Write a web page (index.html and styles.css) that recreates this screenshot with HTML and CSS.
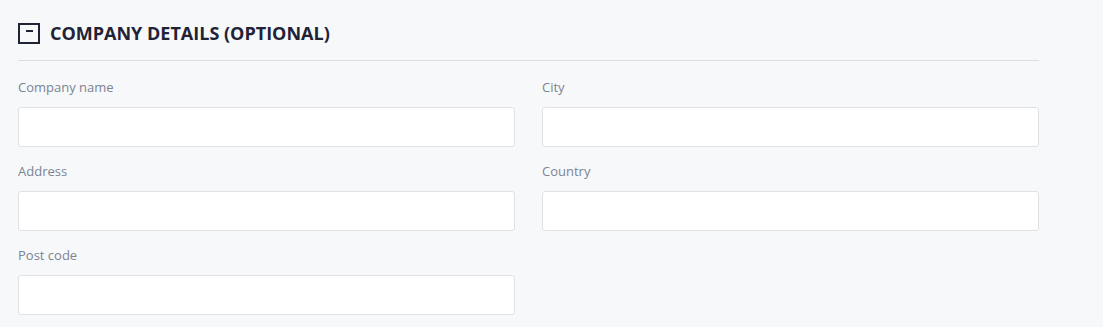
FILE: index.html
```html
<!DOCTYPE html>
<html lang="en">
<head>
    <meta charset="UTF-8">
    <title>Company details</title>
    <link rel="stylesheet" href="styles.css">
</head>
<body>
    <div class="section">
        <div class="section-header">
            <div class="toggle-box"><span class="toggle-dash"></span></div>
            <div class="section-title">COMPANY DETAILS (OPTIONAL)</div>
        </div>
        <div class="fields">
            <div class="field">
                <label class="field-label">Company name</label>
                <input type="text" class="field-input" />
            </div>
            <div class="field">
                <label class="field-label">City</label>
                <input type="text" class="field-input" />
            </div>
            <div class="field">
                <label class="field-label">Address</label>
                <input type="text" class="field-input" />
            </div>
            <div class="field">
                <label class="field-label">Country</label>
                <input type="text" class="field-input" />
            </div>
            <div class="field">
                <label class="field-label">Post code</label>
                <input type="text" class="field-input" />
            </div>
        </div>
    </div>
</body>
</html>
```

FILE: styles.css
```css
body {
    margin: 0;
    background-color: #f7f8fa;
    font-family: 'Open Sans', 'Noto Sans', sans-serif;
}

.section {
    width: 1021px;
    padding-left: 18px;
}

.section-header {
    display: flex;
    align-items: center;
    gap: 10px;
    margin-top: 23px;
    padding-bottom: 16px;
    border-bottom: 1px solid #dcdee2;
}

.toggle-box {
    width: 18px;
    height: 17px;
    border: 2px solid #1f2336;
    display: flex;
    justify-content: center;
}

.toggle-dash {
    width: 7px;
    height: 2px;
    margin-top: 5px;
    background-color: #1f2336;
}

.section-title {
    font-size: 18px;
    font-weight: bold;
    color: #1f2336;
    line-height: 21px;
}

.fields {
    display: grid;
    grid-template-columns: 497px 497px;
    column-gap: 27px;
    row-gap: 15px;
    margin-top: 17px;
}

.field {
    display: flex;
    flex-direction: column;
}

.field-label {
    font-size: 13px;
    line-height: 18px;
    color: #7b8494;
    margin-bottom: 11px;
}

.field-input {
    box-sizing: border-box;
    height: 40px;
    background-color: white;
    border: 1px solid #dfe1e5;
    border-radius: 3px;
    outline: none;
}
```
